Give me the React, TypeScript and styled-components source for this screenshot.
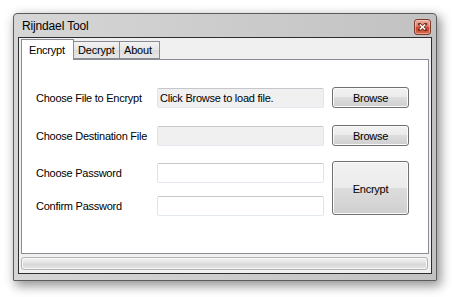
import React from 'react'
import styled, { createGlobalStyle } from 'styled-components'

const GlobalStyle = createGlobalStyle`
	html, body {
		margin: 0;
		padding: 0;
		background: #ffffff;
	}
	body {
		font-family: "Liberation Sans", Arial, sans-serif;
		font-size: 11px;
		color: #000;
	}
`

const Desktop = styled.div`
	width: 452px;
	height: 297px;
	box-sizing: border-box;
	padding: 13px 0 0 13px;
`

const Window = styled.div`
	width: 424px;
	height: 268px;
	box-sizing: border-box;
	border: 1px solid #5c5c5c;
	border-radius: 4px 4px 1px 1px;
	background: linear-gradient(to right, #d6d6d6, #c2c2c2);
	box-shadow: 3px 4px 11px 1px rgba(0, 0, 0, 0.42);
	padding: 0 4px 6px 4px;
	display: flex;
	flex-direction: column;
`

const TitleBar = styled.div`
	height: 23px;
	display: flex;
	align-items: center;
	justify-content: space-between;
	padding: 0 1px 0 4px;
`

const Title = styled.span`
	font-size: 12px;
	letter-spacing: -0.15px;
	margin-top: 1px;
`

const CloseButton = styled.div`
	width: 15px;
	height: 14px;
	margin-top: 3px;
	border: 1px solid #7a3a2e;
	border-radius: 3px;
	background: linear-gradient(#eab2a4 0%, #de7c66 45%, #c9452b 55%, #d8694d 100%);
	box-shadow: inset 0 0 0 1px rgba(255, 220, 210, 0.5);
	display: flex;
	align-items: center;
	justify-content: center;
`

const Client = styled.div`
	flex: 1;
	border: 1px solid #2e2e2e;
	background: #f0f0f0;
	padding: 1px 2px 3px 2px;
	display: flex;
	flex-direction: column;
`

const TabStrip = styled.div`
	height: 20px;
	display: flex;
	align-items: flex-end;
	position: relative;
	z-index: 1;
`

const Tab = styled.div<{ $active?: boolean; $width: number }>`
	box-sizing: border-box;
	width: ${p => p.$width}px;
	height: ${p => (p.$active ? 21 : 18)}px;
	margin-bottom: ${p => (p.$active ? -1 : 0)}px;
	border: 1px solid #898c95;
	border-bottom: ${p => (p.$active ? 'none' : '1px solid #898c95')};
	margin-left: ${p => (p.$active ? 0 : -1)}px;
	background: ${p =>
		p.$active ? '#ffffff' : 'linear-gradient(#f3f3f3, #e6e6e6 50%, #dcdcdc 51%, #e8e8e8)'};
	padding-left: ${p => (p.$active ? 7 : 4)}px;
	line-height: ${p => (p.$active ? 20 : 17)}px;
	letter-spacing: -0.2px;
	white-space: nowrap;
`

const Panel = styled.div`
	height: 195px;
	box-sizing: border-box;
	border: 1px solid #898c95;
	background: #ffffff;
	padding: 27px 0 0 14px;
`

const Form = styled.div`
	display: grid;
	grid-template-columns: 113px 167px 77px;
	grid-template-rows: 21px 17px 21px 17px 20px 13px 20px;
	column-gap: 8px;
`

const Label = styled.div<{ $row: number }>`
	grid-column: 1;
	grid-row: ${p => p.$row};
	align-self: center;
	letter-spacing: -0.25px;
	white-space: nowrap;
`

const TextBox = styled.div<{ $row: number; $readOnly?: boolean }>`
	grid-column: 2;
	grid-row: ${p => p.$row};
	align-self: center;
	box-sizing: border-box;
	height: 20px;
	border: 1px solid;
	border-color: #c5c7cc #e0e3e8 #e3e9ef #e0e3e8;
	border-radius: 2px;
	background: ${p => (p.$readOnly ? '#f0f0f0' : '#ffffff')};
	padding-left: 2px;
	line-height: 18px;
	letter-spacing: -0.25px;
	white-space: nowrap;
	overflow: hidden;
`

const Button = styled.div<{ $rows: string; $tall?: boolean }>`
	grid-column: 3;
	grid-row: ${p => p.$rows};
	margin: ${p => (p.$tall ? '-2px 0 1px 0' : '0')};
	box-sizing: border-box;
	border: 1px solid #707070;
	border-radius: 3px;
	background: linear-gradient(#f2f2f2 0%, #ebebeb 50%, #dddddd 50%, #cfcfcf 100%);
	box-shadow: inset 0 0 0 1px #fbfbfb;
	display: flex;
	align-items: center;
	justify-content: center;
	letter-spacing: -0.25px;
	padding-top: ${p => (p.$tall ? 2 : 0)}px;
`

const Spacer = styled.div`
	height: 3px;
`

const ProgressBar = styled.div`
	height: 13px;
	box-sizing: border-box;
	margin-right: 1px;
	border: 1px solid #b4b4b4;
	border-radius: 3px;
	background: linear-gradient(#f4f4f4 0%, #e2e2e2 45%, #d6d6d6 55%, #e6e6e6 100%);
	box-shadow: inset 0 0 0 1px #f7f7f7;
`

function CloseGlyph() {
	return (
		<svg width="9" height="8" viewBox="0 0 9 8">
			<path d="M1.5 1.2 L7.5 6.8 M7.5 1.2 L1.5 6.8" stroke="#6b2b1e" strokeWidth="3" strokeLinecap="square" />
			<path d="M1.8 1.5 L7.2 6.5 M7.2 1.5 L1.8 6.5" stroke="#ffffff" strokeWidth="1.6" />
		</svg>
	)
}

export default function App() {
	return (
		<Desktop>
			<GlobalStyle />
			<Window>
				<TitleBar>
					<Title>Rijndael Tool</Title>
					<CloseButton>
						<CloseGlyph />
					</CloseButton>
				</TitleBar>
				<Client>
					<TabStrip>
						<Tab $active $width={53}>Encrypt</Tab>
						<Tab $width={47}>Decrypt</Tab>
						<Tab $width={41}>About</Tab>
					</TabStrip>
					<Panel>
						<Form>
							<Label $row={1}>Choose File to Encrypt</Label>
							<TextBox $row={1} $readOnly>Click Browse to load file.</TextBox>
							<Button $rows="1">Browse</Button>

							<Label $row={3}>Choose Destination File</Label>
							<TextBox $row={3} $readOnly />
							<Button $rows="3">Browse</Button>

							<Label $row={5}>Choose Password</Label>
							<TextBox $row={5} />

							<Label $row={7}>Confirm Password</Label>
							<TextBox $row={7} />
							<Button $rows="5 / 8" $tall>Encrypt</Button>
						</Form>
					</Panel>
					<Spacer />
					<ProgressBar />
				</Client>
			</Window>
		</Desktop>
	)
}
